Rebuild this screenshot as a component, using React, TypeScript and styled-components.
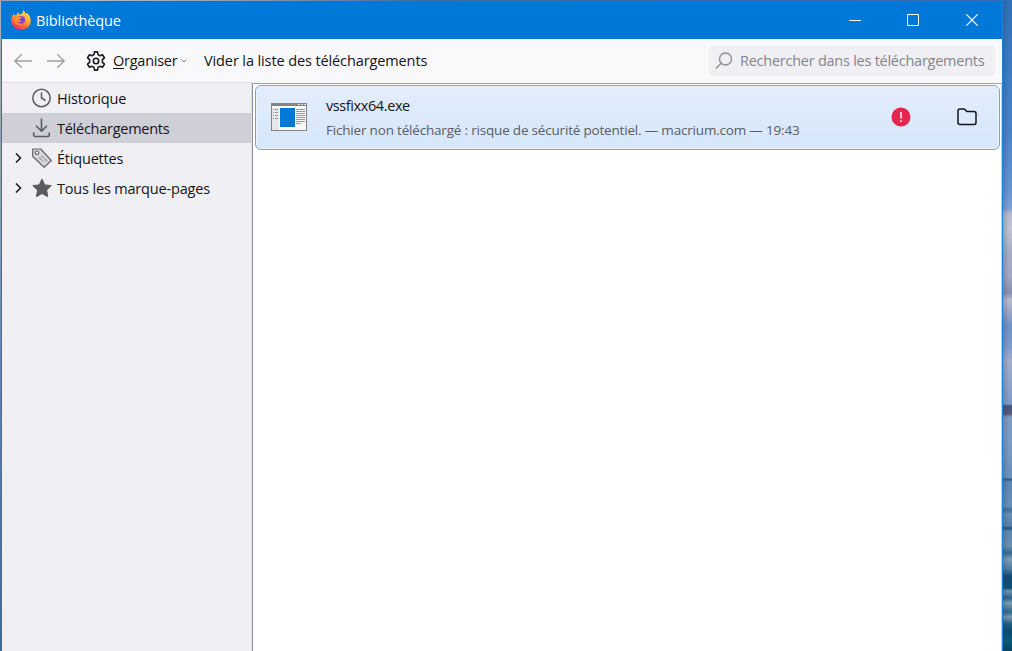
import React from "react";
import styled, { createGlobalStyle } from "styled-components";

const Global = createGlobalStyle`
  * { box-sizing: border-box; }
  body { margin: 0; overflow: hidden; font-family: "Open Sans", "Noto Sans", sans-serif; font-size: 14px; color: #15141a; }
  svg { display: block; flex: none; }
`;
const Desktop = styled.div`
  width: 1012px; height: 651px; display: flex; padding: 1px 0 0 1px;
  background: linear-gradient(90deg, #8d9cb4 0, #b3b8c2 90px, #8d9cb4 240px, #3c6ea6 420px, #2f72b5 1012px) 0 0 / 100% 1px no-repeat,
    linear-gradient(#a9afba 0, #8f9db5 200px, #5f80b0 400px, #3b6a96 651px);
`;
const Window = styled.div`
  height: 650px; width: 1002px; flex: none; display: flex; flex-direction: column;
  border-left: 1px solid #1b78d0; border-right: 1px solid #1b82da;
  background: #f9f9fb;
`;
const Seaside = styled.div`
  width: 9px; height: 650px;
  background: linear-gradient(90deg, rgba(30, 60, 110, 0.25), transparent 6px),
    linear-gradient(#2f70b8 0, #3e7cc2 70px, #4a82c6 130px, #6695d2 190px, #7ea0d2 207px, #b9bbcf 213px, #c2c3d2 228px, #a9adc5 250px, #a2a8c2 275px, #8791b0 292px, #b9bbcd 299px, #9fa8c4 310px, #6f93c8 325px, #7d9cca 345px, #a3aecb 360px, #8fa3c8 385px, #7f9bc8 403px, #41557c 405px, #5a5a78 413px, #7f9cc0 416px, #7c9cc4 440px, #6a90ba 477px, #255788 478px, #5b87b3 481px, #6790b8 505px, #3d6d99 509px, #6790b5 513px, #5580a8 525px, #1c5281 527px, #5d88ad 530px, #6a8fae 545px, #35688f 552px, #7e9cb4 558px, #4d7c9e 568px, #0f4a73 575px, #0f5078 587px, #7093ac 590px, #2c6389 597px, #7d9cb0 602px, #2f678c 611px, #7a9bb0 616px, #1f5c80 623px, #0b4a6e 630px, #0a5a78 640px, #064363 650px);
`;
const TitleBar = styled.header`
  height: 38px; flex: none; display: flex; align-items: center; background: #0078d7; color: #fff;
  padding: 0 1px 0 9px;
`;
const Label = styled.span<{ $size?: number; $track?: number; $color?: string }>`
  font-size: ${p => p.$size ?? 14.5}px;
  letter-spacing: ${p => p.$track ?? -0.2}px;
  color: ${p => p.$color ?? "inherit"};
  line-height: 20px; white-space: nowrap;
`;
const Title = styled(Label)`margin-left: 5px; padding-top: 2px;`;
const WindowButtons = styled.div`
  margin-left: auto; display: flex;
`;
const WindowButton = styled.div`
  width: 58.5px; height: 38px; display: flex; align-items: center; justify-content: center;
`;
const Toolbar = styled.nav`
  height: 43px; flex: none; display: flex; align-items: center; padding: 0 7px 0 11px;
`;
const NavArrows = styled.div`display: flex; gap: 13px; margin-right: 20px;`;
const Organise = styled.div`display: flex; align-items: center; gap: 7px; width: 118px;`;
const Menu = styled.span`display: flex; align-items: center; gap: 4px;`;
const AccessKey = styled.span`text-decoration: underline; text-underline-offset: 2px; text-decoration-thickness: 1px;`;
const Search = styled.div`
  margin-left: auto; width: 286px; height: 30px; border-radius: 4px; background: #f0f0f4;
  display: flex; align-items: center; padding-left: 6px; gap: 7px;
`;
const Content = styled.div`flex: 1; display: flex; min-height: 0;`;
const Sidebar = styled.aside`
  width: 250px; background: #f0f0f4; border-top: 1px solid #e0e0e4; border-right: 1px solid #e0e0e4;
`;
const TreeRow = styled.div<{ $selected?: boolean }>`
  height: 30px; display: flex; align-items: center; padding-left: 13px;
  background: ${p => (p.$selected ? "#cfcfd8" : "transparent")};
`;
const TreeLabel = styled(Label)`padding-top: 2px;`;
const Twisty = styled.span`width: 17px; height: 10px; flex: none;`;
const RowIcon = styled.span`width: 20px; margin-right: 5px; flex: none;`;
const Downloads = styled.main`
  flex: 1; background: #fff; border-top: 1px solid #a0a0a0; border-left: 1px solid #8f8f9d;
  border-right: 1px solid #d9cfc8; margin-top: 1px; padding: 1px 1px 0 2px;
`;
const DownloadItem = styled.article`
  height: 65px; display: flex; align-items: center; border: 1px solid #7da2ce; border-radius: 6px;
  background: linear-gradient(#e3edfd, #d5e7f9); box-shadow: inset 0 0 0 1px #eef5fe;
  padding: 0 22px 1px 15px;
`;
const Details = styled.div`display: flex; flex-direction: column; margin-left: 19px; gap: 4px; flex: 1; padding-top: 2px;`;
const Warning = styled.div`margin-right: 46px;`;

const Firefox = () => (
  <svg width="20" height="20" viewBox="0 0 20 20">
    <defs>
      <linearGradient id="flame" x1="0.85" y1="0" x2="0.3" y2="1">
        <stop offset="0" stopColor="#fff04a" /><stop offset="0.4" stopColor="#ffb52e" />
        <stop offset="0.7" stopColor="#ff6b35" /><stop offset="1" stopColor="#f0286c" />
      </linearGradient>
      <radialGradient id="globe"><stop offset="0" stopColor="#5b3fd8" /><stop offset="1" stopColor="#9b48c8" /></radialGradient>
    </defs>
    <path d="M12.2.2c1.600 1 2.200 2.700 2.600 4.100.6-.6.6-1.300.5-1.800 2.600 1.800 4.500 5.100 4.500 8.200 0 5.200-4.300 9.100-9.700 9.100S.3 15.800.3 10.600C.3 7.800 1.300 5.300 2.800 3.600c0 .8.2 1.500.6 2C4 5 5 4.700 5.900 4.700 5.800 3.900 6.300 2.900 7 2.300c.2.9 1 1.800 2 2.100C11.200 3.900 12 2.300 12.200.2z" fill="url(#flame)" />
    <circle cx="10.300" cy="9.800" r="3.900" fill="url(#globe)" />
    <path d="M2.700 8.500C3.500 6 6.300 4.800 8.500 6.600c1 .1 1.900.2 2.600.6-.3 1.100-1.600 1.200-2.200 1.600-.4 1.800.7 2.400 2.100 2-1 1.600-3.200 1.700-4.500.4.300 2.300 2.700 3.400 4.900 2.800-3.200 2.200-8.800.5-8.700-5.500z" fill="#ff8a30" />
  </svg>
);
const Arrow = ({ flip }: { flip?: boolean }) => (
  <svg width="20" height="16" viewBox="0 0 20 16" fill="none" stroke="#a0a0a4" strokeWidth="1.400">
    <path d={flip ? "M1 8H18M11.300 1.200L18.100 8L11.300 14.800" : "M19 8H2M8.700 1.200L1.900 8L8.700 14.800"} />
  </svg>
);
const Gear = () => (
  <svg width="20" height="20" viewBox="0 0 20 20" fill="none" stroke="#1c1b22" strokeWidth="1.600" strokeLinejoin="round">
    <path d="M8.500.9h3l.5 2.700 1.900 1.100 2.600-.9 1.900 3-2 1.900v2.600l2 1.900-1.900 3-2.600-.9-1.900 1.100-.5 2.700h-3L8 16.400l-1.900-1.100-2.600.9-1.900-3 2-1.900V8.700l-2-1.900 1.900-3 2.600.9L8 3.600z" />
    <circle cx="10" cy="10" r="2.700" />
  </svg>
);
const Chevron = () => (
  <svg width="7" height="10" viewBox="0 0 7 10" fill="none" stroke="#15141a" strokeWidth="1.500"><path d="M1 .5L5.500 5L1 9.500" /></svg>
);
const Clock = () => (
  <svg width="20" height="20" viewBox="0 0 20 20" fill="none" stroke="#5b5b66" strokeWidth="1.500"><circle cx="9.500" cy="10" r="8.700" /><path d="M9.500 4.500V10l4 2.500" /></svg>
);
const Download = () => (
  <svg width="20" height="20" viewBox="0 0 20 20" fill="none" stroke="#5b5b66" strokeWidth="1.600" strokeLinecap="round" strokeLinejoin="round"><path d="M9.500 1v12M4.500 8.200l5 5 5-5M1.700 15v2q0 1.500 1.500 1.500h12.600q1.500 0 1.500-1.500v-2" /></svg>
);
const Tag = () => (
  <svg width="20" height="20" viewBox="0 0 20 20" fill="#d8d8dc" stroke="#66666b" strokeWidth="1.200" strokeLinejoin="round"><path d="M.7 1v7.500l11.500 10.800 7.100-6.800L8.700 1z" /><circle cx="5" cy="4.800" r="1.800" fill="#f0f0f4" /><path d="M7 9.500l4.500 4.300M9.500 8l5.500 5" stroke="#98989d" strokeDasharray="3.500 1" /></svg>
);
const Star = () => (
  <svg width="20" height="20" viewBox="0 0 20 20" fill="#5b5b5f" stroke="#5b5b5f" strokeLinejoin="round"><path d="M10 1l2.700 5.900 6.500.7-4.600 4.600 1.200 6.500L10 15.500l-5.600 3.200L5.600 12.200.8 7.600l6.500-.7z" /></svg>
);
const AppFile = () => (
  <svg width="36" height="28" viewBox="0 0 36 28" shapeRendering="crispEdges">
    <path d="M.5.5h35v27H.5z" fill="#f8f8f8" stroke="#858585" /><path d="M0 0h36v3H0z" fill="#858585" />
    <path d="M1 5h7v22H1z" fill="#e6e8ea" /><path d="M27 1h2v1h-2zM30 1h2v1h-2zM33 1h2v1h-2z" fill="#ddd" />
    <path d="M9 5h15v19H9z" fill="#0078d7" />
    <path d="M2 6.500h1M4 6.500h3M2 9.500h1M4 9.500h3M2 12.500h1M4 12.500h3M2 15.500h1M4 15.500h3M25 6.500h9M25 8.500h9M25 10.500h9M25 12.500h9M25 14.500h9M25 16.500h9M25 18.500h9M25 20.500h5" stroke="#999" />
  </svg>
);

const tree = [
  { name: "Historique", icon: <Clock />, track: -0.14 },
  { name: "Téléchargements", icon: <Download />, selected: true, track: -0.26 },
  { name: "Étiquettes", icon: <Tag />, open: true, track: -0.2 },
  { name: "Tous les marque-pages", icon: <Star />, open: true, track: -0.17 },
];

export default function App() {
  return (
    <Desktop>
      <Global />
      <Window>
        <TitleBar>
          <Firefox />
          <Title $track={-0.1}>Bibliothèque</Title>
          <WindowButtons>
            <WindowButton><svg width="12" height="12"><path d="M0 6.500h12" stroke="#fff" /></svg></WindowButton>
            <WindowButton><svg width="12" height="12"><path d="M.5.5h11v11H.5z" fill="none" stroke="#fff" /></svg></WindowButton>
            <WindowButton><svg width="12" height="12"><path d="M0 0l12 12M12 0L0 12" stroke="#fff" strokeWidth="1.200" /></svg></WindowButton>
          </WindowButtons>
        </TitleBar>
        <Toolbar>
          <NavArrows><Arrow /><Arrow flip /></NavArrows>
          <Organise>
            <Gear />
            <Menu>
              <Label $track={-0.25}><AccessKey>O</AccessKey>rganiser</Label>
              <svg width="6" height="4" viewBox="0 0 6 4" fill="none" stroke="#77777c"><path d="M.7.700L3 3L5.300.700" /></svg>
            </Menu>
          </Organise>
          <Label $track={-0.11}>Vider la liste des téléchargements</Label>
          <Search>
            <svg width="18" height="18" viewBox="0 0 18 18" fill="none" stroke="#909095" strokeWidth="1.400"><circle cx="10.500" cy="7" r="6" /><path d="M6.200 11.300L1 16.500" /></svg>
            <Label $color="#84848b" $track={-0.25}>Rechercher dans les téléchargements</Label>
          </Search>
        </Toolbar>
        <Content>
          <Sidebar>
            {tree.map(row => (
              <TreeRow key={row.name} $selected={row.selected}>
                <Twisty>{row.open && <Chevron />}</Twisty>
                <RowIcon>{row.icon}</RowIcon>
                <TreeLabel $track={row.track}>{row.name}</TreeLabel>
              </TreeRow>
            ))}
          </Sidebar>
          <Downloads>
            <DownloadItem>
              <AppFile />
              <Details>
                <Label $track={-0.4}>vssfixx64.exe</Label>
                <Label $size={13.5} $track={-0.19} $color="#5b5b66">Fichier non téléchargé : risque de sécurité potentiel. — macrium.com — 19:43</Label>
              </Details>
              <Warning>
                <svg width="20" height="20" viewBox="0 0 20 20"><circle cx="10" cy="10" r="9.500" fill="#e22850" /><path d="M10 5v6.500M10 13.300v1.700" stroke="#fff" strokeWidth="1.500" /></svg>
              </Warning>
              <svg width="20" height="18" viewBox="0 0 20 18" fill="none" stroke="#15141a" strokeWidth="1.500" strokeLinejoin="round"><path d="M1 3q0-2 2-2h3.500q1 0 1.700.9L9.800 3.500H17q2 0 2 2V14.500q0 2-2 2H3q-2 0-2-2z" /></svg>
            </DownloadItem>
          </Downloads>
        </Content>
      </Window>
      <Seaside />
    </Desktop>
  );
}
